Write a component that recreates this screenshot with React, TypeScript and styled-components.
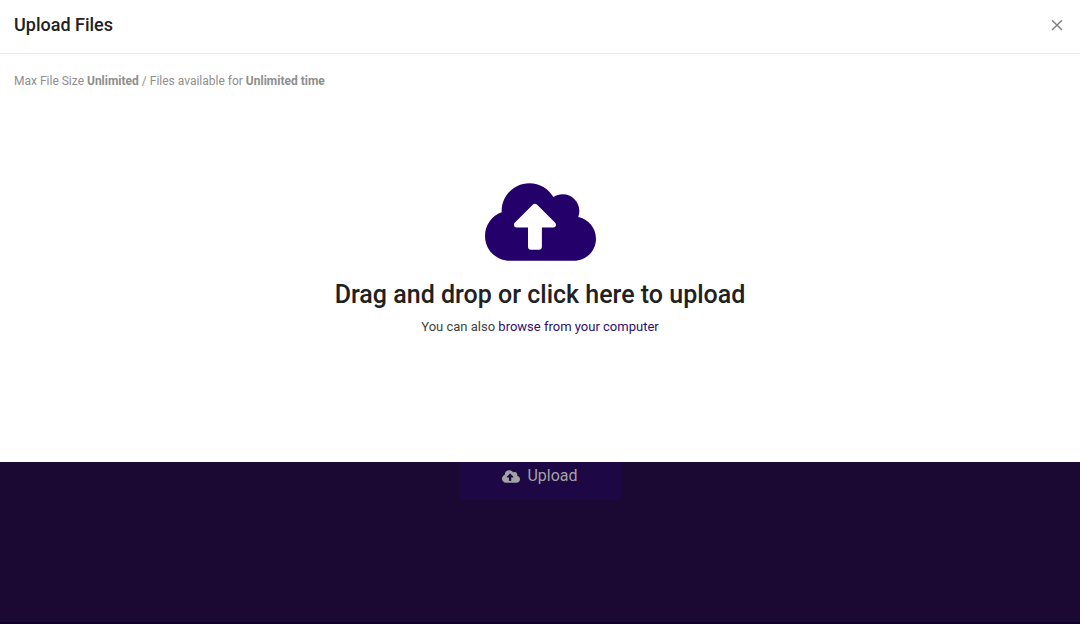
import React from "react";
import styled, { createGlobalStyle } from "styled-components";
import { FaCloudUploadAlt } from "react-icons/fa";

const GlobalStyle = createGlobalStyle`
  *, *::before, *::after { box-sizing: border-box; }
  body {
    margin: 0;
    font-family: Roboto, "Liberation Sans", sans-serif;
    color: #212121;
    background: #1b0933;
  }
`;

const Page = styled.main`
  position: relative;
  display: flex;
  flex-direction: column;
  align-items: center;
  min-height: 100vh;
  padding-top: 452px;
  border-bottom: 2px solid #0e0226;
`;

const UploadButton = styled.button`
  display: flex;
  align-items: center;
  justify-content: center;
  gap: 7px;
  min-width: 162px;
  height: 48px;
  padding: 0 24px;
  border: 0;
  border-radius: 3px;
  background: #1d0745;
  color: #a3a3a3;
  font: 400 16px/24px Roboto, "Liberation Sans", sans-serif;
  cursor: pointer;
`;

const Dialog = styled.section`
  position: absolute;
  top: 0;
  left: 0;
  right: 0;
  display: flex;
  flex-direction: column;
  min-height: 462px;
  background: #fff;
`;

const DialogHeader = styled.header`
  display: flex;
  align-items: center;
  justify-content: space-between;
  padding: 12px 16px 16px 14px;
  border-bottom: 1px solid #ebebeb;
`;

const Title = styled.h1`
  margin: 0;
  font-size: 18px;
  line-height: 25px;
  font-weight: 500;
`;

const CloseButton = styled.button`
  display: flex;
  padding: 0;
  border: 0;
  background: none;
  color: #808080;
  cursor: pointer;
`;

const Limits = styled.p`
  margin: 0;
  padding: 19px 14px 0;
  font-size: 12px;
  line-height: 16px;
  color: #8e8e8e;

  strong { font-weight: 700; }
`;

const DropZone = styled.div`
  display: flex;
  flex-direction: column;
  align-items: center;
  padding: 88px 16px 0;
  text-align: center;
  cursor: pointer;
`;

const CloudIcon = styled(FaCloudUploadAlt)`
  width: 111px;
  height: 90px;
  color: #24006b;
`;

const ButtonIcon = styled(FaCloudUploadAlt)`
  width: 18px;
  height: 15px;
`;

const DropTitle = styled.h2`
  margin: 12px 0 0;
  font-size: 25px;
  line-height: 32px;
  font-weight: 500;
`;

const DropHint = styled.p`
  margin: 7px 0 0;
  font-size: 13px;
  line-height: 18px;
  color: #424242;
`;

const BrowseLink = styled.a`
  color: #2f0c72;
  text-decoration: none;
`;

export default function App() {
  return (
    <>
      <GlobalStyle />
      <Page>
        <UploadButton type="button">
          <ButtonIcon aria-hidden />
          Upload
        </UploadButton>
        <Dialog role="dialog" aria-labelledby="upload-title">
          <DialogHeader>
            <Title id="upload-title">Upload Files</Title>
            <CloseButton type="button" aria-label="Close">
              <svg width="14" height="14" viewBox="0 0 14 14" fill="none" stroke="currentColor" strokeWidth="1.4">
                <path d="M2 2.2L12 12M12 2.2L2 12" />
              </svg>
            </CloseButton>
          </DialogHeader>
          <Limits>
            Max File Size <strong>Unlimited</strong> / Files available for <strong>Unlimited time</strong>
          </Limits>
          <DropZone>
            <CloudIcon aria-hidden />
            <DropTitle>Drag and drop or click here to upload</DropTitle>
            <DropHint>
              You can also <BrowseLink href="#browse">browse from your computer</BrowseLink>
            </DropHint>
          </DropZone>
        </Dialog>
      </Page>
    </>
  );
}
